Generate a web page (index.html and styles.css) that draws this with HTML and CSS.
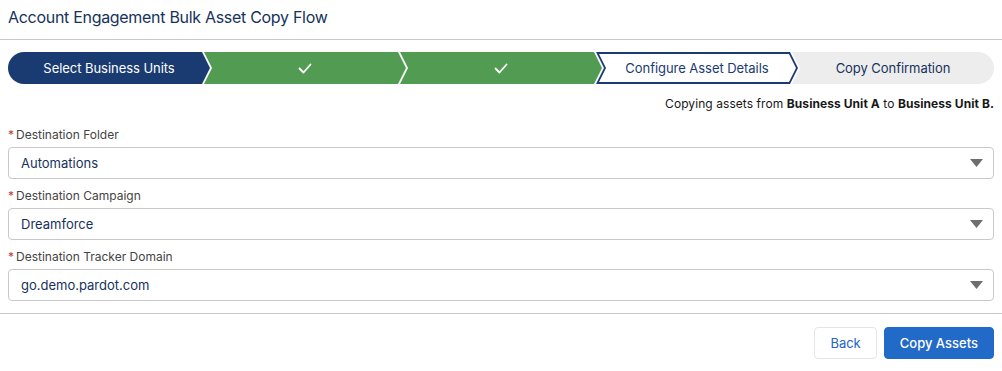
FILE: index.html
```html
<!DOCTYPE html>
<html lang="en">
<head>
    <meta charset="UTF-8">
    <meta name="viewport" content="width=device-width, initial-scale=1.0">
    <title>Account Engagement Bulk Asset Copy Flow</title>
    <link rel="stylesheet" href="styles.css">
</head>
<body>
    <div class="modal-header">
        <h1>Account Engagement Bulk Asset Copy Flow</h1>
    </div>

    <div class="modal-body">
        <!-- Progress path -->
        <div class="path">
            <div class="step step-first step-active"><span>Select Business Units</span></div>
            <div class="step step-done">
                <svg width="14" height="11" viewBox="0 0 14 11"><polyline points="1.5,5.5 5.5,9.5 12.5,1.5" fill="none" stroke="#fff" stroke-width="1.8" stroke-linecap="round" stroke-linejoin="round"/></svg>
            </div>
            <div class="step step-done">
                <svg width="14" height="11" viewBox="0 0 14 11"><polyline points="1.5,5.5 5.5,9.5 12.5,1.5" fill="none" stroke="#fff" stroke-width="1.8" stroke-linecap="round" stroke-linejoin="round"/></svg>
            </div>
            <div class="step step-current"><span>Configure Asset Details</span></div>
            <div class="step step-last"><span>Copy Confirmation</span></div>
        </div>

        <p class="copy-info">Copying assets from <b>Business Unit A</b> to <b>Business Unit B.</b></p>

        <div class="field">
            <label><abbr>*</abbr>Destination Folder</label>
            <div class="select">
                <span>Automations</span>
                <svg width="13" height="8" viewBox="0 0 13 8"><polygon points="0,0 13,0 6.5,8" fill="#706e6b"/></svg>
            </div>
        </div>

        <div class="field">
            <label><abbr>*</abbr>Destination Campaign</label>
            <div class="select">
                <span>Dreamforce</span>
                <svg width="13" height="8" viewBox="0 0 13 8"><polygon points="0,0 13,0 6.5,8" fill="#706e6b"/></svg>
            </div>
        </div>

        <div class="field">
            <label><abbr>*</abbr>Destination Tracker Domain</label>
            <div class="select">
                <span>go.demo.pardot.com</span>
                <svg width="13" height="8" viewBox="0 0 13 8"><polygon points="0,0 13,0 6.5,8" fill="#706e6b"/></svg>
            </div>
        </div>
    </div>

    <div class="modal-footer">
        <button class="btn btn-neutral">Back</button>
        <button class="btn btn-brand">Copy Assets</button>
    </div>
</body>
</html>
```

FILE: styles.css
```css
body {
    margin: 0;
    font-family: "Inter", "Liberation Sans", sans-serif;
    color: #181818;
    background: #fff;
}

.modal-header {
    height: 32px;
    padding: 7px 8px 0;
    border-bottom: 1px solid #c9c9c9;
}

.modal-header h1 {
    margin: 0;
    font-size: 16px;
    line-height: 20px;
    font-weight: 400;
    color: #16325c;
    letter-spacing: -0.3px;
}

.modal-body {
    padding: 12px 8px 12px;
}

/* Path */
.path {
    display: flex;
    height: 32px;
}

.step {
    flex: 1;
    position: relative;
    display: flex;
    justify-content: center;
    align-items: center;
    font-size: 13px;
    letter-spacing: -0.05px;
    margin-left: -6px;
    clip-path: polygon(0 0, calc(100% - 8px) 0, 100% 50%, calc(100% - 8px) 100%, 0 100%, 8px 50%);
}

.step span {
    position: relative;
}

.step-first {
    margin-left: 0;
    border-radius: 16px 0 0 16px;
    clip-path: polygon(0 0, calc(100% - 8px) 0, 100% 50%, calc(100% - 8px) 100%, 0 100%);
}

.step-last {
    border-radius: 0 16px 16px 0;
    clip-path: polygon(0 0, 100% 0, 100% 100%, 0 100%, 8px 50%);
    background: #ededed;
    color: #16325c;
}

.step-active {
    background: #193b72;
    color: #fff;
}

.step-done {
    background: #519b53;
}

.step-current {
    background: #193b72;
    color: #193b72;
}

.step-current::before {
    content: "";
    position: absolute;
    top: 2px;
    bottom: 2px;
    left: 3px;
    right: 2px;
    background: #fff;
    clip-path: polygon(0 0, calc(100% - 7px) 0, 100% 50%, calc(100% - 7px) 100%, 0 100%, 7px 50%);
}

.copy-info {
    margin: 12px 0 0;
    text-align: right;
    font-size: 12px;
    line-height: 16px;
    letter-spacing: 0.07px;
    color: #181818;
}

.copy-info b {
    font-weight: 700;
}

/* Form fields */
.field {
    margin-top: 13px;
}

.field + .field {
    margin-top: 7px;
}

.field label {
    display: block;
    font-size: 12px;
    line-height: 18px;
    padding-top: 1px;
    color: #444;
    margin-bottom: 3px;
}

.field abbr {
    color: #c23934;
    margin-right: 2px;
}

.select {
    height: 30px;
    border: 1px solid #c9c9c9;
    border-radius: 4px;
    display: flex;
    align-items: center;
    justify-content: space-between;
    padding: 0 10px 0 12px;
    font-size: 13px;
    color: #16325c;
}

/* Footer */
.modal-footer {
    border-top: 1px solid #c9c9c9;
    padding: 13px 8px;
    display: flex;
    justify-content: flex-end;
    gap: 7px;
}

.btn {
    height: 32px;
    padding: 0 15px;
    border-radius: 4px;
    font-family: inherit;
    font-size: 13px;
}

.btn-neutral {
    background: #fff;
    border: 1px solid #e5e5e5;
    color: #2563c4;
}

.btn-brand {
    background: #226ac8;
    border: 1px solid #226ac8;
    color: #fff;
    font-weight: 500;
}
```
